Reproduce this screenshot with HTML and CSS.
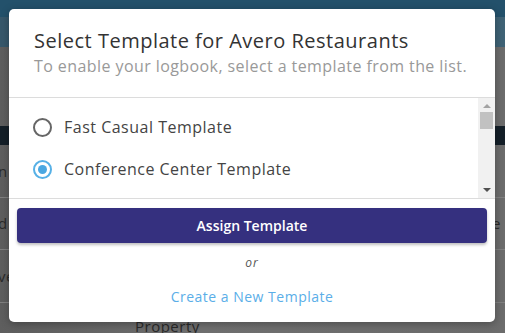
FILE: index.html
```html
<!DOCTYPE html>
<html lang="en">
<head>
    <meta charset="UTF-8">
    <title>Select Template</title>
    <link rel="stylesheet" href="styles.css">
</head>
<body>
    <!-- Page behind the modal -->
    <div class="page">
        <div class="topbar"></div>
        <div class="subbar"></div>
        <div class="spacer"></div>
        <div class="darkrow"></div>
        <div class="row"><span class="cell-left">n</span></div>
        <div class="row"><span class="cell-left">d</span><span class="cell-right">e</span></div>
        <div class="row"><span class="cell-left">ve</span></div>
        <div class="row short"><span class="cell-mid">Property</span></div>
    </div>

    <!-- Modal -->
    <div class="modal">
        <div class="modal-header">
            <h2>Select Template for Avero Restaurants</h2>
            <p>To enable your logbook, select a template from the list.</p>
        </div>
        <div class="template-list">
            <div class="options">
                <label class="option">
                    <span class="radio"></span>
                    Fast Casual Template
                </label>
                <label class="option">
                    <span class="radio checked"></span>
                    Conference Center Template
                </label>
            </div>
            <div class="scrollbar">
                <span class="arrow up"></span>
                <span class="thumb"></span>
                <span class="track"></span>
                <span class="arrow down"></span>
            </div>
        </div>
        <div class="modal-footer">
            <button type="button">Assign Template</button>
            <div class="or">or</div>
            <a href="#" class="create-link">Create a New Template</a>
        </div>
    </div>
</body>
</html>
```

FILE: styles.css
```css
body {
    margin: 0;
    font-family: "Open Sans", Arial, sans-serif;
    letter-spacing: 0.5px;
    width: 505px;
    height: 333px;
    overflow: hidden;
    position: relative;
    background-color: #6b6b6b;
}
.page {
    display: flex;
    flex-direction: column;
    height: 333px;
    background: linear-gradient(to right, #5e5e5e, #707070 40%, #6c6c6c);
}
.topbar {
    height: 17px;
    background-color: #23516b;
}
.subbar {
    height: 31px;
    background: linear-gradient(to right, #37586b, #3f6376);
}
.spacer {
    height: 81px;
}
.darkrow {
    height: 20px;
    background-color: #141f28;
}
.row {
    height: 53px;
    border-bottom: 1px solid #808080;
    display: flex;
    align-items: center;
    justify-content: space-between;
    color: #2a2a2a;
    font-size: 15px;
}
.row:first-of-type {
    height: 9px;
}
.row.short {
    border-bottom: none;
    align-items: flex-end;
    height: 31px;
}
.cell-left {
    margin-left: -2px;
}
.cell-right {
    margin-right: 4px;
}
.cell-mid {
    margin-left: 135px;
    line-height: 14px;
}

.modal {
    position: absolute;
    left: 9px;
    top: 9px;
    width: 486px;
    height: 313px;
    background-color: white;
    border-radius: 5px;
    display: flex;
    flex-direction: column;
    box-shadow: 0 2px 8px rgba(0, 0, 0, 0.3);
}
.modal-header {
    padding: 18px 0 0 25px;
    border-bottom: 1px solid #dcdcdc;
    box-sizing: border-box;
    height: 89px;
}
.modal-header h2 {
    margin: 0;
    font-size: 20px;
    font-weight: normal;
    color: #333;
    line-height: 28px;
}
.modal-header p {
    margin: 1px 0 0;
    font-size: 16px;
    letter-spacing: 0.42px;
    color: #999;
    line-height: 21px;
    white-space: nowrap;
}
.template-list {
    display: flex;
    height: 100px;
    border-bottom: 1px solid #dcdcdc;
}
.options {
    flex: 1;
    display: flex;
    flex-direction: column;
    padding-top: 8px;
}
.option {
    display: flex;
    align-items: center;
    gap: 12px;
    height: 42px;
    padding-left: 24px;
    font-size: 16px;
    color: #444;
}
.radio {
    width: 15px;
    height: 15px;
    border: 2px solid #666;
    border-radius: 50%;
    display: flex;
    align-items: center;
    justify-content: center;
}
.radio.checked {
    border-color: #56b0e6;
}
.radio.checked::after {
    content: "";
    width: 9px;
    height: 9px;
    border-radius: 50%;
    background-color: #4aa7e1;
}
.scrollbar {
    width: 17px;
    background-color: #f1f1f1;
    display: flex;
    flex-direction: column;
    align-items: center;
}
.arrow {
    width: 0;
    height: 0;
    border-left: 4px solid transparent;
    border-right: 4px solid transparent;
}
.arrow.up {
    margin-top: 6px;
    border-bottom: 4px solid #a3a3a3;
}
.arrow.down {
    margin-bottom: 6px;
    border-top: 4px solid #505050;
}
.thumb {
    width: 13px;
    height: 17px;
    margin-top: 4px;
    background-color: #c1c1c1;
}
.track {
    flex: 1;
}
.modal-footer {
    display: flex;
    flex-direction: column;
    align-items: center;
    padding: 9px 8px 0;
}
button {
    width: 100%;
    height: 35px;
    background-color: #35307f;
    color: white;
    border: none;
    border-radius: 4px;
    font-family: "Open Sans", Arial, sans-serif;
    font-size: 14px;
    font-weight: 600;
    box-shadow: 0 2px 3px rgba(0, 0, 0, 0.25);
    cursor: pointer;
}
.or {
    margin-top: 11px;
    font-size: 12px;
    font-style: italic;
    color: #555;
    letter-spacing: 1px;
}
.create-link {
    margin-top: 16px;
    font-size: 14px;
    color: #5aaee8;
    text-decoration: none;
}
```
